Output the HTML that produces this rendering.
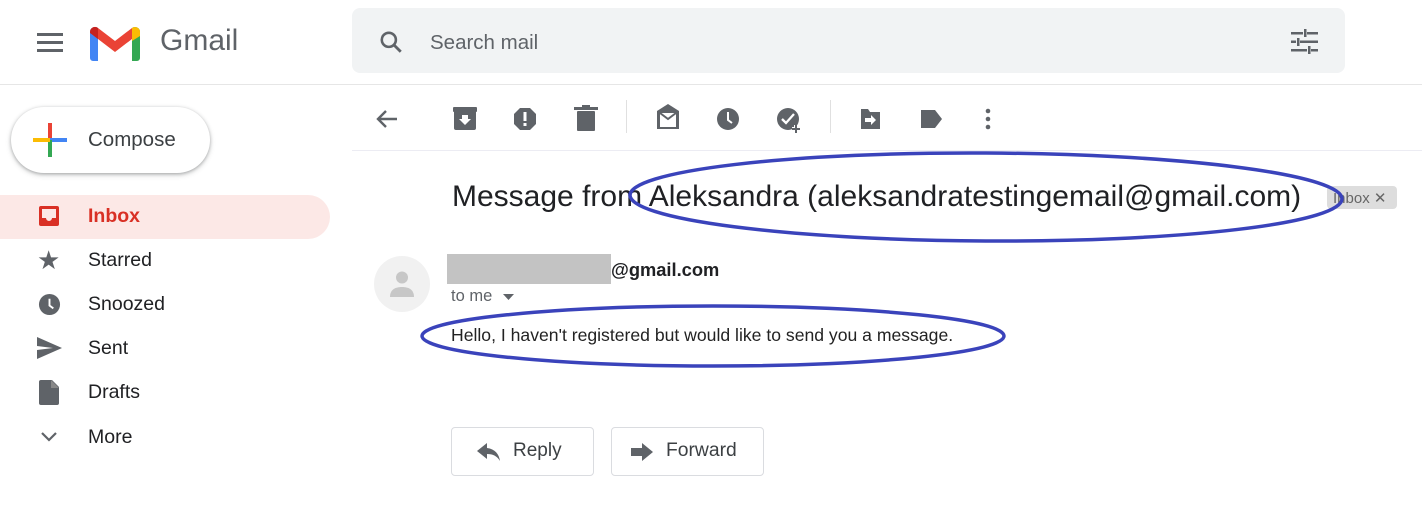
<!DOCTYPE html>
<html><head><meta charset="utf-8"><style>
*{margin:0;padding:0;box-sizing:border-box}
body{width:1422px;height:525px;background:#fff;position:relative;overflow:hidden;font-family:"Liberation Sans",Arial,sans-serif;color:#202124}
.a{position:absolute}
.nav{position:absolute;left:88px;font-size:19.5px;color:#202124}
.ic{position:absolute}
</style></head><body>
<!-- header -->
<svg class="a" style="left:37px;top:32px" width="26" height="20"><rect y="1" width="26" height="3" fill="#5f6368"/><rect y="9" width="26" height="3" fill="#5f6368"/><rect y="17" width="26" height="3" fill="#5f6368"/></svg>
<svg class="a" style="left:90px;top:23px" width="50" height="38" viewBox="0 0 50 38">
<path d="M0 9a5 5 0 0 1 8-4v33H3a3 3 0 0 1-3-3z" fill="#4285f4"/>
<path d="M50 9a5 5 0 0 0-8-4v33h5a3 3 0 0 0 3-3z" fill="#34a853"/>
<path d="M2 5a5 5 0 0 1 6 0l17 13 17-13v11L25 29 8 16 2 11z" fill="#ea4335"/>
<path d="M42 5a5 5 0 0 1 8 4v4l-8 5z" fill="#fbbc04"/>
<path d="M0 9a5 5 0 0 1 8-4v11L0 10z" fill="#c5221f"/>
</svg>
<div class="a" style="left:160px;top:24px;font-size:30px;color:#5f6368">Gmail</div>
<div class="a" style="left:352px;top:8px;width:993px;height:65px;background:#f1f3f4;border-radius:8px"></div>
<svg class="a" style="left:378px;top:29px" width="26" height="26" viewBox="0 0 24 24"><circle cx="10" cy="10" r="6.5" stroke="#5f6368" stroke-width="2.4" fill="none"/><path d="M15 15l6 6" stroke="#5f6368" stroke-width="2.6"/></svg>
<div class="a" style="left:430px;top:31px;font-size:20.5px;color:#5f6368">Search mail</div>
<svg class="a" style="left:1291px;top:29px" width="27" height="26" viewBox="0 0 27 26" fill="#5f6368"><rect x="0" y="3" width="12" height="2.5"/><rect x="16" y="3" width="11" height="2.5"/><rect x="13" y="0" width="2.5" height="8"/><rect x="0" y="11.5" width="5" height="2.5"/><rect x="9" y="11.5" width="18" height="2.5"/><rect x="6" y="9" width="2.5" height="8"/><rect x="0" y="20" width="16" height="2.5"/><rect x="20" y="20" width="7" height="2.5"/><rect x="17" y="17" width="2.5" height="8"/></svg>
<div class="a" style="left:0;top:84px;width:1422px;height:1px;background:#e6e6e6"></div>
<!-- compose -->
<div class="a" style="left:11px;top:107px;width:199px;height:66px;border-radius:33px;background:#fff;box-shadow:0 1px 3px rgba(60,64,67,.35),0 2px 6px rgba(60,64,67,.2)"></div>
<svg class="a" style="left:33px;top:123px" width="34" height="34"><rect x="15" y="0" width="4" height="17" fill="#ea4335"/><rect x="17" y="15" width="17" height="4" fill="#4285f4"/><rect x="15" y="17" width="4" height="17" fill="#34a853"/><rect x="0" y="15" width="17" height="4" fill="#fbbc04"/></svg>
<div class="a" style="left:88px;top:128px;font-size:20.5px;color:#3c4043">Compose</div>
<!-- nav -->
<div class="a" style="left:0;top:195px;width:330px;height:44px;background:#fce8e6;border-radius:0 22px 22px 0"></div>
<svg class="ic" style="left:38px;top:205px" width="22" height="22" viewBox="0 0 22 22"><rect x="1" y="1" width="20" height="20" rx="2" fill="#d93025"/><path d="M4 4h14v9h-4a3 3 0 0 1-6 0H4z" fill="#fce8e6"/></svg>
<div class="nav" style="top:205px;color:#d93025;font-weight:bold">Inbox</div>
<div class="a" style="left:37px;top:247px;font-size:26px;color:#5f6368;line-height:26px">★</div>
<div class="nav" style="top:249px">Starred</div>
<svg class="ic" style="left:38px;top:293px" width="23" height="23" viewBox="0 0 24 24"><circle cx="12" cy="12" r="11" fill="#5f6368"/><path d="M12 6v7l4 3" stroke="#fff" stroke-width="2" fill="none"/></svg>
<div class="nav" style="top:293px">Snoozed</div>
<svg class="ic" style="left:37px;top:337px" width="25" height="22" viewBox="0 0 25 22"><path d="M0 0L25 11L0 22L0 13L16 11L0 9Z" fill="#5f6368"/></svg>
<div class="nav" style="top:337px">Sent</div>
<svg class="ic" style="left:39px;top:380px" width="20" height="25" viewBox="0 0 20 25"><path d="M2 0h11l7 7v16a2 2 0 0 1-2 2H2a2 2 0 0 1-2-2V2a2 2 0 0 1 2-2z" fill="#5f6368"/><path d="M12 0v8h8" fill="#888"/></svg>
<div class="nav" style="top:381px">Drafts</div>
<svg class="ic" style="left:41px;top:432px" width="16" height="10"><path d="M1 1l7 7 7-7" stroke="#5f6368" stroke-width="2.2" fill="none"/></svg>
<div class="nav" style="top:426px">More</div>
<!-- toolbar -->
<svg class="a" style="left:352px;top:100px" width="660" height="40" viewBox="0 0 660 40" fill="#5f6368">
<path d="M45 19H27M34 11l-8 8 8 8" stroke="#5f6368" stroke-width="2.4" fill="none"/>
<rect x="102" y="8" width="22" height="22" rx="2"/><rect x="101" y="7" width="24" height="5" rx="1"/><path d="M110 15h6v4h3l-6 6-6-6h3z" fill="#fff"/>
<path d="M168 8h10l6 6v10l-6 6h-10l-6-6V14z"/><rect x="171.5" y="12" width="3" height="9" fill="#fff"/><rect x="171.5" y="23" width="3" height="3" fill="#fff"/>
<rect x="225" y="11" width="18" height="20" rx="1"/><rect x="222" y="7" width="24" height="3"/><rect x="230" y="5" width="8" height="3"/>
<rect x="274" y="0" width="1" height="33" fill="#e0e0e0"/>
<path d="M305 11l11-7 11 7v18H305z"/><path d="M308 13h16v14h-16z" fill="#fff"/><path d="M308 13l8 6 8-6" stroke="#5f6368" stroke-width="2" fill="none"/>
<circle cx="376" cy="19" r="11"/><path d="M376 12v8l4 3" stroke="#fff" stroke-width="2" fill="none"/>
<circle cx="436" cy="19" r="11"/><path d="M430 19l4 4 8-9" stroke="#fff" stroke-width="2.3" fill="none"/><path d="M444 25v8M440 29h8" stroke="#fff" stroke-width="4"/><path d="M444 25v8M440 29h8" stroke="#5f6368" stroke-width="2"/>
<rect x="478" y="0" width="1" height="33" fill="#e0e0e0"/>
<path d="M509 9h7l2 3h10v17h-19z"/><path d="M513 18h6v-3l5 5-5 5v-3h-6z" fill="#fff"/>
<path d="M569 10h14l7 9-7 9h-14z"/>
<circle cx="636" cy="11" r="2.3"/><circle cx="636" cy="19" r="2.3"/><circle cx="636" cy="27" r="2.3"/>
</svg>
<div class="a" style="left:352px;top:150px;width:1070px;height:1px;background:#ececf3"></div>
<!-- message -->
<div class="a" style="left:452px;top:180px;font-size:30px;color:#202124;white-space:nowrap">Message from Aleksandra (aleksandratestingemail@gmail.com)</div>
<div class="a" style="left:1327px;top:186px;width:70px;height:23px;background:#dddddd;border-radius:4px;font-size:15px;color:#666;padding:3px 0 0 6px">Inbox ✕</div>
<div class="a" style="left:374px;top:256px;width:56px;height:56px;border-radius:50%;background:#f1f1f1"></div>
<svg class="a" style="left:389px;top:270px" width="26" height="28"><circle cx="13" cy="7.5" r="6" fill="#c7c7c7"/><path d="M1 27c0-8 6-10 12-10s12 2 12 10z" fill="#c7c7c7"/></svg>
<div class="a" style="left:447px;top:254px;width:164px;height:30px;background:#c3c3c3"></div>
<div class="a" style="left:611px;top:259px;font-size:18.3px;font-weight:bold;color:#202124">@gmail.com</div>
<div class="a" style="left:451px;top:287px;font-size:16.5px;color:#5f6368">to me</div>
<svg class="a" style="left:503px;top:294px" width="11" height="6"><path d="M0 0h11L5.5 6z" fill="#5f6368"/></svg>
<div class="a" style="left:451px;top:325px;font-size:17.6px;color:#222">Hello, I haven't registered but would like to send you a message.</div>
<!-- buttons -->
<div class="a" style="left:451px;top:427px;width:143px;height:49px;border:1px solid #dadce0;border-radius:4px"></div>
<svg class="a" style="left:477px;top:443px" width="24" height="18" viewBox="0 0 24 18"><path d="M10 0L0 8l10 8v-5c6 0 10 2 13 7-1-7-5-12-13-13z" fill="#5f6368"/></svg>
<div class="a" style="left:513px;top:440px;font-size:19px;color:#3c4043">Reply</div>
<div class="a" style="left:611px;top:427px;width:153px;height:49px;border:1px solid #dadce0;border-radius:4px"></div>
<svg class="a" style="left:631px;top:443px" width="22" height="18"><path d="M0 5h11V0l11 9-11 9v-5H0z" fill="#5f6368"/></svg>
<div class="a" style="left:666px;top:440px;font-size:19.3px;color:#3c4043">Forward</div>
<!-- ellipses -->
<svg class="a" style="left:0;top:0" width="1422" height="525"><ellipse cx="986" cy="197" rx="356" ry="44" stroke="#3a43bb" stroke-width="3.5" fill="none" transform="rotate(0.3 986 197)"/><ellipse cx="713" cy="336" rx="291" ry="30" stroke="#3a43bb" stroke-width="3.5" fill="none"/></svg>
</body></html>
